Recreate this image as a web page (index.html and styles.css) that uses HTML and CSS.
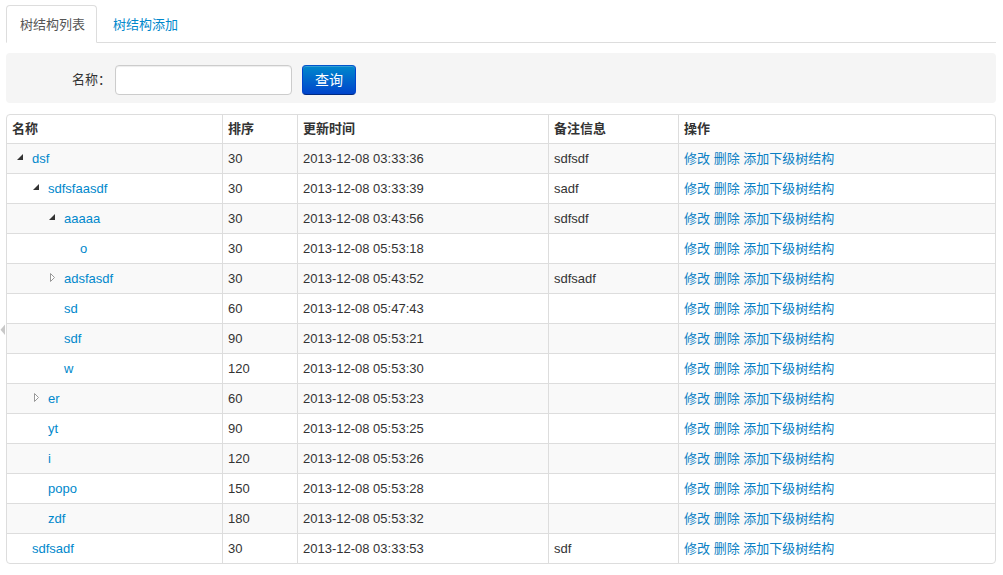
FILE: index.html
```html
<!DOCTYPE html>
<html lang="zh-CN">
<head>
<meta charset="utf-8">
<title>树结构列表</title>
<link rel="stylesheet" href="styles.css">
</head>
<body>
<div class="splitter"><svg width="7" height="12" viewBox="0 0 7 12"><polygon points="5,0.5 5,11 0.5,5.75" fill="#c8c8c8"/></svg></div>
<div class="page">
  <ul class="tabs">
    <li class="tab active"><a>树结构列表</a></li>
    <li class="tab"><a href="#">树结构添加</a></li>
  </ul>

  <form class="well">
    <label class="lbl">名称：</label>
    <input class="inp" type="text">
    <button class="btn" type="button">查询</button>
  </form>

  <table class="grid">
    <thead>
      <tr>
        <th class="c1">名称</th>
        <th class="c2">排序</th>
        <th class="c3">更新时间</th>
        <th class="c4">备注信息</th>
        <th>操作</th>
      </tr>
    </thead>
    <tbody>
      <tr><td><span class="ind lv0"></span><span class="exp"><svg width="20" height="21"><polygon points="11,6 11,12 5,12" fill="#333"/></svg></span><a href="#">dsf</a></td><td>30</td><td>2013-12-08 03:33:36</td><td>sdfsdf</td><td class="ops"><a href="#">修改</a> <a href="#">删除</a> <a href="#">添加下级树结构</a></td></tr>
      <tr><td><span class="ind lv1"></span><span class="exp"><svg width="20" height="21"><polygon points="11,6 11,12 5,12" fill="#333"/></svg></span><a href="#">sdfsfaasdf</a></td><td>30</td><td>2013-12-08 03:33:39</td><td>sadf</td><td class="ops"><a href="#">修改</a> <a href="#">删除</a> <a href="#">添加下级树结构</a></td></tr>
      <tr><td><span class="ind lv2"></span><span class="exp"><svg width="20" height="21"><polygon points="11,6 11,12 5,12" fill="#333"/></svg></span><a href="#">aaaaa</a></td><td>30</td><td>2013-12-08 03:43:56</td><td>sdfsdf</td><td class="ops"><a href="#">修改</a> <a href="#">删除</a> <a href="#">添加下级树结构</a></td></tr>
      <tr><td><span class="ind lv3"></span><span class="exp"></span><a href="#">o</a></td><td>30</td><td>2013-12-08 05:53:18</td><td></td><td class="ops"><a href="#">修改</a> <a href="#">删除</a> <a href="#">添加下级树结构</a></td></tr>
      <tr><td><span class="ind lv2"></span><span class="exp"><svg width="20" height="21"><polygon points="6.5,5.5 10.5,9.5 6.5,13.5" fill="#fff" stroke="#999"/></svg></span><a href="#">adsfasdf</a></td><td>30</td><td>2013-12-08 05:43:52</td><td>sdfsadf</td><td class="ops"><a href="#">修改</a> <a href="#">删除</a> <a href="#">添加下级树结构</a></td></tr>
      <tr><td><span class="ind lv2"></span><span class="exp"></span><a href="#">sd</a></td><td>60</td><td>2013-12-08 05:47:43</td><td></td><td class="ops"><a href="#">修改</a> <a href="#">删除</a> <a href="#">添加下级树结构</a></td></tr>
      <tr><td><span class="ind lv2"></span><span class="exp"></span><a href="#">sdf</a></td><td>90</td><td>2013-12-08 05:53:21</td><td></td><td class="ops"><a href="#">修改</a> <a href="#">删除</a> <a href="#">添加下级树结构</a></td></tr>
      <tr><td><span class="ind lv2"></span><span class="exp"></span><a href="#">w</a></td><td>120</td><td>2013-12-08 05:53:30</td><td></td><td class="ops"><a href="#">修改</a> <a href="#">删除</a> <a href="#">添加下级树结构</a></td></tr>
      <tr><td><span class="ind lv1"></span><span class="exp"><svg width="20" height="21"><polygon points="6.5,5.5 10.5,9.5 6.5,13.5" fill="#fff" stroke="#999"/></svg></span><a href="#">er</a></td><td>60</td><td>2013-12-08 05:53:23</td><td></td><td class="ops"><a href="#">修改</a> <a href="#">删除</a> <a href="#">添加下级树结构</a></td></tr>
      <tr><td><span class="ind lv1"></span><span class="exp"></span><a href="#">yt</a></td><td>90</td><td>2013-12-08 05:53:25</td><td></td><td class="ops"><a href="#">修改</a> <a href="#">删除</a> <a href="#">添加下级树结构</a></td></tr>
      <tr><td><span class="ind lv1"></span><span class="exp"></span><a href="#">i</a></td><td>120</td><td>2013-12-08 05:53:26</td><td></td><td class="ops"><a href="#">修改</a> <a href="#">删除</a> <a href="#">添加下级树结构</a></td></tr>
      <tr><td><span class="ind lv1"></span><span class="exp"></span><a href="#">popo</a></td><td>150</td><td>2013-12-08 05:53:28</td><td></td><td class="ops"><a href="#">修改</a> <a href="#">删除</a> <a href="#">添加下级树结构</a></td></tr>
      <tr><td><span class="ind lv1"></span><span class="exp"></span><a href="#">zdf</a></td><td>180</td><td>2013-12-08 05:53:32</td><td></td><td class="ops"><a href="#">修改</a> <a href="#">删除</a> <a href="#">添加下级树结构</a></td></tr>
      <tr><td><span class="ind lv0"></span><span class="exp"></span><a href="#">sdfsadf</a></td><td>30</td><td>2013-12-08 03:33:53</td><td>sdf</td><td class="ops"><a href="#">修改</a> <a href="#">删除</a> <a href="#">添加下级树结构</a></td></tr>
    </tbody>
  </table>
</div>
</body>
</html>
```

FILE: styles.css
```css
html, body {
  margin: 0;
  padding: 0;
  background: #fff;
}
body {
  font-family: "Liberation Sans", Arial, "Noto Sans CJK SC", sans-serif;
  font-size: 13px;
  line-height: 20px;
  color: #333;
  position: relative;
}
a {
  color: #0088cc;
  text-decoration: none;
}
.splitter {
  position: absolute;
  left: 0;
  top: 324px;
  width: 7px;
  height: 12px;
  line-height: 0;
}
.page {
  padding: 5px 7px 0 6px;
}

/* tabs */
.tabs {
  list-style: none;
  margin: 0;
  padding: 0;
  display: flex;
  border-bottom: 1px solid #ddd;
}
.tab {
  margin-bottom: -1px;
  margin-right: 2px;
}
.tab a {
  display: block;
  padding: 9px 11px 7px 13px;
  line-height: 20px;
  border: 1px solid transparent;
  border-radius: 4px 4px 0 0;
}
.tab.active a {
  color: #555;
  background: #fff;
  border-color: #ddd;
  border-bottom-color: transparent;
}

/* search well */
.well {
  margin: 10px 0 0;
  padding: 12px 0 8px 66px;
  background: #f5f5f5;
  border-radius: 4px;
  display: flex;
  align-items: center;
}
.lbl {
  margin-right: 4px;
  color: #333;
}
.inp {
  box-sizing: border-box;
  width: 177px;
  height: 30px;
  border: 1px solid #ccc;
  border-radius: 4px;
  background: #fff;
  box-shadow: inset 0 1px 1px rgba(0,0,0,0.075);
  padding: 4px 6px;
  font: inherit;
  margin: 0;
}
.btn {
  box-sizing: border-box;
  margin-left: 10px;
  width: 54px;
  height: 30px;
  border: 1px solid #0044cc;
  border-color: #0055cc #0044cc #002a80;
  border-radius: 4px;
  background: linear-gradient(to bottom, #0088cc, #0044cc);
  color: #fff;
  font-family: "Liberation Sans", Arial, "Noto Sans CJK SC", sans-serif;
  font-size: 14px;
  line-height: 20px;
  padding: 0;
  box-shadow: inset 0 1px 0 rgba(255,255,255,0.2);
}

/* table */
.grid {
  margin-top: 11px;
  width: 990px;
  table-layout: fixed;
  border-collapse: separate;
  border-spacing: 0;
  border: 1px solid #ddd;
  border-radius: 4px;
}
.grid th, .grid td {
  box-sizing: border-box;
  padding: 4px 5px;
  line-height: 21px;
  text-align: left;
  vertical-align: top;
  border-left: 1px solid #ddd;
  white-space: nowrap;
  overflow: hidden;
}
.grid th {
  padding: 3px 5px 4px;
  font-weight: bold;
  color: #333;
}
.grid td {
  border-top: 1px solid #ddd;
}
.grid th:first-child, .grid td:first-child {
  border-left: 0;
}
.grid th.c1 { width: 215px; }
.grid th.c2 { width: 75px; }
.grid th.c3 { width: 251px; }
.grid th.c4 { width: 130px; }
.grid tbody tr:nth-child(odd) td {
  background: #f9f9f9;
}
.grid tbody tr:last-child td:first-child { border-bottom-left-radius: 4px; }
.grid tbody tr:last-child td:last-child { border-bottom-right-radius: 4px; }

.ind {
  display: inline-block;
  height: 21px;
  vertical-align: top;
}
.lv0 { width: 0; }
.lv1 { width: 16px; }
.lv2 { width: 32px; }
.lv3 { width: 48px; }
.exp {
  display: inline-block;
  width: 20px;
  height: 21px;
  vertical-align: top;
}
.exp svg {
  display: block;
}
.ops a {
  color: #0a7fc4;
}
```
